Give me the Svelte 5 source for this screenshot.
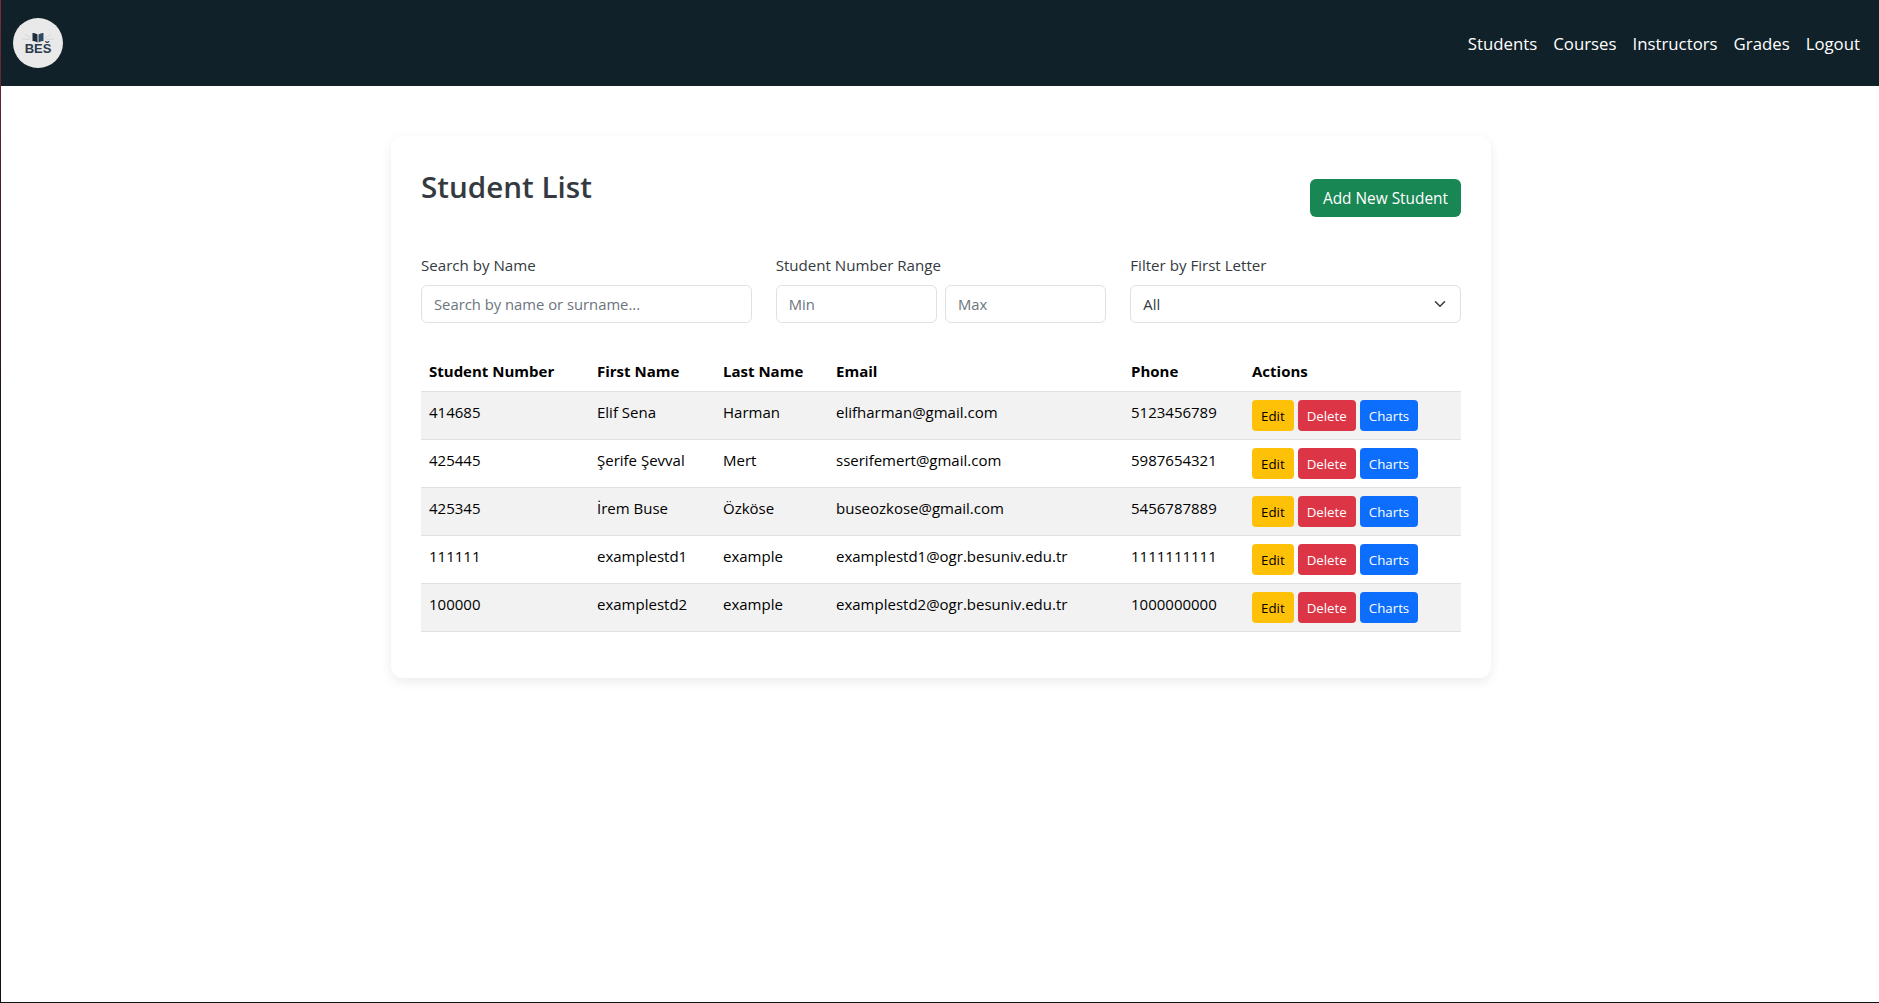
<script lang="ts">
  const navLinks = ['Students', 'Courses', 'Instructors', 'Grades', 'Logout'];

  const students = [
    { number: '414685', first: 'Elif Sena', last: 'Harman', email: 'elifharman@gmail.com', phone: '5123456789' },
    { number: '425445', first: 'Şerife Şevval', last: 'Mert', email: 'sserifemert@gmail.com', phone: '5987654321' },
    { number: '425345', first: 'İrem Buse', last: 'Özköse', email: 'buseozkose@gmail.com', phone: '5456787889' },
    { number: '111111', first: 'examplestd1', last: 'example', email: 'examplestd1@ogr.besuniv.edu.tr', phone: '1111111111' },
    { number: '100000', first: 'examplestd2', last: 'example', email: 'examplestd2@ogr.besuniv.edu.tr', phone: '1000000000' }
  ];
</script>

<div class="page">
  <div class="content">
    <nav class="navbar">
      <div class="logo">
        <svg class="logo-mark" viewBox="0 0 34 11" width="34" height="11" aria-hidden="true">
          <path d="M1 7 L9 7.5 M4 2.5 L10 6 M33 7 L25 7.5 M30 2.5 L24 6" stroke="#cfcfcf" stroke-width="0.7" fill="none" />
          <path d="M16.5 2.5 Q14 0.5 11.5 1 V9 Q14 8.6 16.5 10.5 Z" fill="#1f2d3a" />
          <path d="M17.5 2.5 Q20 0.5 22.5 1 V9 Q20 8.6 17.5 10.5 Z" fill="#2f4a63" />
        </svg>
        <span class="logo-text">BEŠ</span>
      </div>
      <ul class="nav-links">
        {#each navLinks as link}
          <li>{link}</li>
        {/each}
      </ul>
    </nav>

    <main class="card">
      <div class="card-head">
        <h2>Student List</h2>
        <button class="btn add">Add New Student</button>
      </div>

      <div class="filters">
        <div class="field">
          <label for="search">Search by Name</label>
          <input id="search" type="text" placeholder="Search by name or surname..." />
        </div>
        <div class="field">
          <label for="min">Student Number Range</label>
          <div class="range">
            <input id="min" type="text" placeholder="Min" />
            <input type="text" placeholder="Max" />
          </div>
        </div>
        <div class="field">
          <label for="letter">Filter by First Letter</label>
          <div class="select" id="letter">
            <span>All</span>
            <svg viewBox="0 0 16 16" width="16" height="12" aria-hidden="true">
              <path d="M2 5l6 6 6-6" fill="none" stroke="#343a40" stroke-width="2" stroke-linecap="round" stroke-linejoin="round" />
            </svg>
          </div>
        </div>
      </div>

      <table>
        <colgroup>
          <col style="width: 168px" />
          <col style="width: 126px" />
          <col style="width: 113px" />
          <col style="width: 295px" />
          <col style="width: 121px" />
          <col />
        </colgroup>
        <thead>
          <tr>
            <th>Student Number</th>
            <th>First Name</th>
            <th>Last Name</th>
            <th>Email</th>
            <th>Phone</th>
            <th>Actions</th>
          </tr>
        </thead>
        <tbody>
          {#each students as s}
            <tr>
              <td>{s.number}</td>
              <td>{s.first}</td>
              <td>{s.last}</td>
              <td>{s.email}</td>
              <td>{s.phone}</td>
              <td>
                <div class="actions">
                  <button class="btn sm edit">Edit</button>
                  <button class="btn sm delete">Delete</button>
                  <button class="btn sm charts">Charts</button>
                </div>
              </td>
            </tr>
          {/each}
        </tbody>
      </table>
    </main>
  </div>
</div>

<style>
  :global(body) {
    margin: 0;
    background: #fff;
    font-family: "Open Sans", "Noto Sans", sans-serif;
    font-size: 16px;
    color: #212529;
  }

  /* the thin frame down the left and along the bottom of the window */
  .page {
    box-sizing: border-box;
    height: 1003px;
    padding: 0 0 1px 1px;
    background: linear-gradient(#7c2d37, #3a1a20 25%, #111 50%);
    overflow: hidden;
  }

  .content {
    height: 100%;
    background: #fff;
  }

  .navbar {
    height: 86px;
    background: #112129;
    display: flex;
    align-items: center;
    justify-content: space-between;
    padding: 0 19px 0 12px;
  }

  .logo {
    width: 50px;
    height: 50px;
    border-radius: 50%;
    background: #e9e9e9;
    display: flex;
    flex-direction: column;
    align-items: center;
    justify-content: center;
  }

  .logo-mark {
    margin-bottom: -1px;
  }

  .logo-text {
    font-family: "Liberation Sans", sans-serif;
    font-weight: 700;
    font-size: 13px;
    line-height: 13px;
    color: #2b3a4c;
  }

  .nav-links {
    display: flex;
    gap: 16px;
    list-style: none;
    margin: 0;
    padding: 0;
    color: #fff;
    font-size: 16.8px;
  }

  .card {
    box-sizing: border-box;
    width: 1100px;
    height: 542px;
    margin: 50px 0 0 390px;
    padding: 30px;
    background: #fff;
    border-radius: 12px;
    box-shadow: 0 4px 12px rgba(0, 0, 0, 0.08);
  }

  .card-head {
    display: flex;
    justify-content: space-between;
    align-items: flex-start;
    height: 89px;
  }

  h2 {
    margin: 2px 0 0;
    font-size: 29.6px;
    line-height: 38px;
    font-weight: 600;
    color: #343a40;
  }

  .btn {
    font: inherit;
    border: 1px solid transparent;
    border-radius: 6px;
    cursor: pointer;
  }

  .add {
    margin-top: 13px;
    width: 151px;
    height: 38px;
    padding: 0;
    font-size: 15.4px;
    background: #198754;
    color: #fff;
  }

  .filters {
    display: grid;
    grid-template-columns: repeat(3, 1fr);
    column-gap: 24px;
    margin-bottom: 28px;
  }

  .field label {
    display: block;
    margin-bottom: 10px;
    font-size: 15.1px;
    line-height: 20px;
    color: #343a40;
  }

  .range {
    display: flex;
    gap: 8px;
  }

  input,
  .select {
    box-sizing: border-box;
    width: 100%;
    min-width: 0;
    height: 38px;
    padding: 0 12px;
    font: inherit;
    font-size: 14.8px;
    color: #343a40;
    background: #fff;
    border: 1px solid #dee2e6;
    border-radius: 6px;
  }

  input::placeholder {
    color: #6c757d;
  }

  .select {
    display: flex;
    align-items: center;
    justify-content: space-between;
  }

  table {
    box-sizing: border-box;
    width: 1040px;
    border-collapse: collapse;
    table-layout: fixed;
    font-size: 15px;
    color: #000;
  }

  th,
  td {
    padding: 8px;
    text-align: left;
    vertical-align: top;
    line-height: 24px;
    border-bottom: 1px solid #dee2e6;
  }

  th {
    font-weight: 700;
  }

  tbody tr:nth-child(odd) {
    background: #f2f2f2;
  }

  .actions {
    display: flex;
    gap: 4px;
  }

  .sm {
    height: 31px;
    padding: 2px 8px 0;
    font-size: 13.3px;
    line-height: 1;
    border-radius: 4px;
  }

  .edit {
    background: #ffc107;
    color: #000;
  }

  .delete {
    background: #dc3545;
    color: #fff;
  }

  .charts {
    background: #0d6efd;
    color: #fff;
  }
</style>
